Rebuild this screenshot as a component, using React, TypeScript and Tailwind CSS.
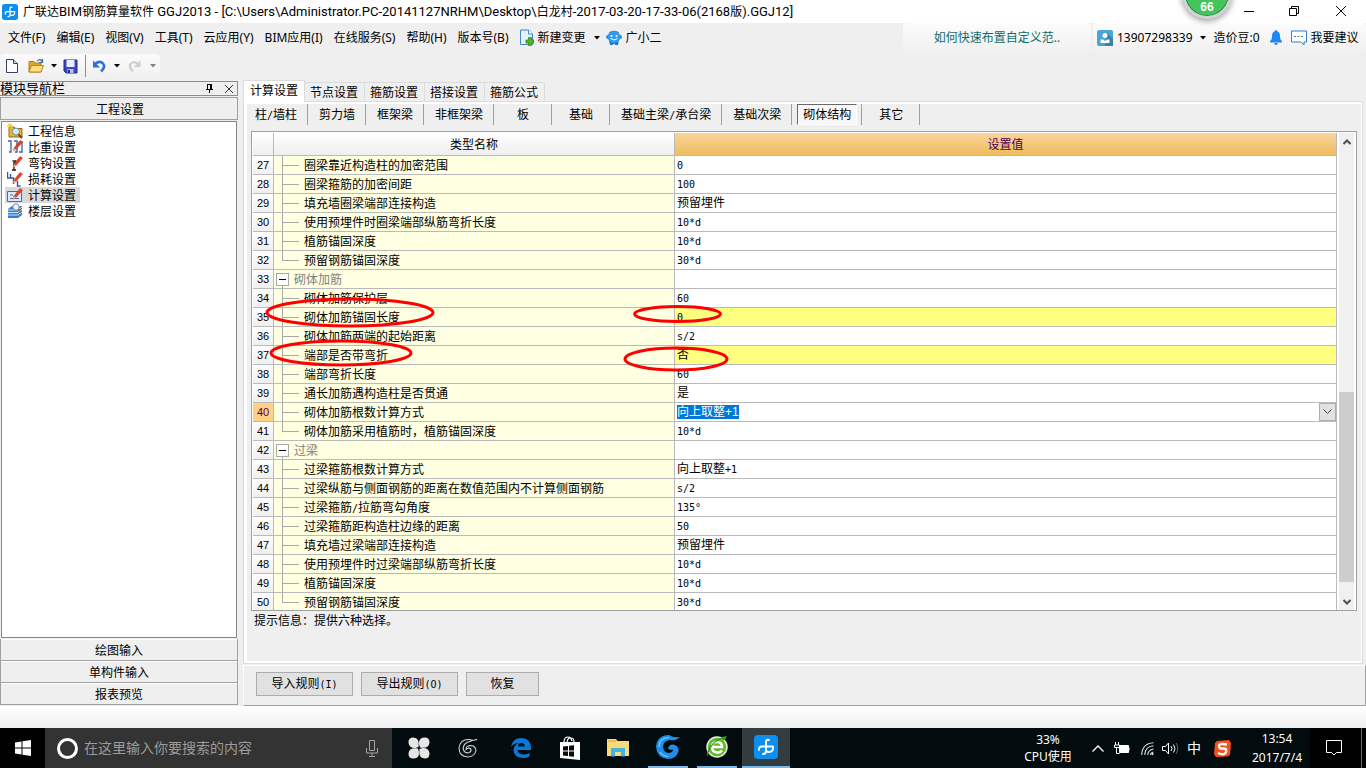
import React, { useState } from 'react';

const UI_FONT = "font-['Noto_Sans','Noto_Sans_CJK_SC',sans-serif]";
const SONG_FONT = "font-['Liberation_Sans','Noto_Sans_CJK_SC',sans-serif]";

interface SettingRow {
  no: number;
  name: string;
  value?: string;
  group?: boolean;
  last?: boolean;
  changed?: boolean;
}

const rows: SettingRow[] = [
  { no: 27, name: '圈梁靠近构造柱的加密范围', value: '0' },
  { no: 28, name: '圈梁箍筋的加密间距', value: '100' },
  { no: 29, name: '填充墙圈梁端部连接构造', value: '预留埋件' },
  { no: 30, name: '使用预埋件时圈梁端部纵筋弯折长度', value: '10*d' },
  { no: 31, name: '植筋锚固深度', value: '10*d' },
  { no: 32, name: '预留钢筋锚固深度', value: '30*d', last: true },
  { no: 33, name: '砌体加筋', group: true },
  { no: 34, name: '砌体加筋保护层', value: '60' },
  { no: 35, name: '砌体加筋锚固长度', value: '0', changed: true },
  { no: 36, name: '砌体加筋两端的起始距离', value: 's/2' },
  { no: 37, name: '端部是否带弯折', value: '否', changed: true },
  { no: 38, name: '端部弯折长度', value: '60' },
  { no: 39, name: '通长加筋遇构造柱是否贯通', value: '是' },
  { no: 40, name: '砌体加筋根数计算方式', value: '向上取整+1' },
  { no: 41, name: '砌体加筋采用植筋时，植筋锚固深度', value: '10*d', last: true },
  { no: 42, name: '过梁', group: true },
  { no: 43, name: '过梁箍筋根数计算方式', value: '向上取整+1' },
  { no: 44, name: '过梁纵筋与侧面钢筋的距离在数值范围内不计算侧面钢筋', value: 's/2' },
  { no: 45, name: '过梁箍筋/拉筋弯勾角度', value: '135°' },
  { no: 46, name: '过梁箍筋距构造柱边缘的距离', value: '50' },
  { no: 47, name: '填充墙过梁端部连接构造', value: '预留埋件' },
  { no: 48, name: '使用预埋件时过梁端部纵筋弯折长度', value: '10*d' },
  { no: 49, name: '植筋锚固深度', value: '10*d' },
  { no: 50, name: '预留钢筋锚固深度', value: '30*d', last: true },
];

const menus = ['文件(F)', '编辑(E)', '视图(V)', '工具(T)', '云应用(Y)', 'BIM应用(I)', '在线服务(S)', '帮助(H)', '版本号(B)'];
const tabs = ['计算设置', '节点设置', '箍筋设置', '搭接设置', '箍筋公式'];
const parts = ['柱/墙柱', '剪力墙', '框架梁', '非框架梁', '板', '基础', '基础主梁/承台梁', '基础次梁', '砌体结构', '其它'];
const windowTitle = '广联达BIM钢筋算量软件 GGJ2013 - [C:\\Users\\Administrator.PC-20141127NRHM\\Desktop\\白龙村-2017-03-20-17-33-06(2168版).GGJ12]';

// ASCII runs get their own face and size, by default half as wide as a Chinese character
const Mixed = ({ text, latin = "font-['DejaVu_Sans_Mono',monospace] text-[10px] leading-none" }: { text: string; latin?: string }) => (
  <>
    {text.split(/([\x20-\x7e°]+)/).map((part, i) =>
      i % 2 ? <span key={i} className={latin}>{part}</span> : part
    )}
  </>
);

const Caret = ({ className = '' }: { className?: string }) => (
  <svg className={className} width="6" height="4" viewBox="0 0 6 4"><path d="M0 0h6L3 3.5z" fill="currentColor" /></svg>
);

/* ---------- icons ---------- */

const AppLogo = ({ size }: { size: number }) => (
  <svg width={size} height={size} viewBox="0 0 24 24">
    <rect width="24" height="24" rx="4" fill="#0d8ff2" />
    <path d="M15 5q-3-1-3 2v9q0 3-3 3M5 15q-.5-3.500 3-3.500h11q.5 5.500-4 5.500-3 0-3-2" fill="none" stroke="#fff" strokeWidth="1.900" strokeLinecap="round" strokeLinejoin="round" />
  </svg>
);

const NewDoc = () => (
  <svg width="16" height="16" viewBox="0 0 16 16">
    <path d="M2.500 1.500h7l4 4v9h-11z" fill="#fafcff" stroke="#33435e" />
    <path d="M9.500 1.500v4h4" fill="#cddcf0" stroke="#33435e" />
  </svg>
);

const OpenFolder = () => (
  <svg width="17" height="16" viewBox="0 0 17 16">
    <path d="M1 3.500h5l1 1.500h6v9H1z" fill="#e2a42e" stroke="#b37a17" />
    <path d="M3.500 7.500h12L13 14H1z" fill="#ffdf80" stroke="#b9851f" />
    <path d="M9 3q3-3 5 .5M14.500 1v3.500H11" fill="none" stroke="#3f6d9c" strokeWidth="1.200" />
  </svg>
);

const SaveDisk = () => (
  <svg width="15" height="15" viewBox="0 0 15 15">
    <path d="M1 1h13v13H3l-2-2z" fill="#3c45c4" stroke="#232a86" />
    <rect x="3.500" y="1" width="8" height="7" fill="#e8eefc" />
    <rect x="4.500" y="10" width="6" height="4" fill="#b9c1e8" />
    <rect x="5" y="11" width="2" height="3" fill="#232a86" />
  </svg>
);

const UndoArrow = () => (
  <svg width="14" height="14" viewBox="0 0 14 14">
    <path d="M3 5q5-4 8-.5T9 12.500" fill="none" stroke="#2f6fd2" strokeWidth="2.500" />
    <path d="M1 1.500v7h7z" fill="#2f6fd2" />
  </svg>
);

const RedoArrow = () => (
  <svg width="14" height="14" viewBox="0 0 14 14">
    <path d="M10 5Q6 1.500 3 4.500t2 8" fill="none" stroke="#cfcfcf" strokeWidth="2.200" />
    <path d="M12.500 1v7H6z" fill="#cfcfcf" />
  </svg>
);

const ChangeDoc = () => (
  <svg width="14" height="17" viewBox="0 0 14 17">
    <path d="M.5 1h8l4 4v10.500H.5z" fill="#e3f1fb" stroke="#3f89c4" />
    <path d="M8.500 1v4h4" fill="#fff" stroke="#3f89c4" />
    <path d="M8.500 8.500h3v2.500H14v3h-2.500v2.500h-3V14H6v-3h2.500z" fill="#55b51f" stroke="#2d7c12" strokeWidth=".7" />
  </svg>
);

const Robot = () => (
  <svg width="16" height="16" viewBox="0 0 16 16">
    <path d="M3 10h10l-1 5H9.500L8 13.500 6.500 15H4z" fill="#1679c5" />
    <circle cx="2" cy="7" r="2" fill="#1e8bdc" /><circle cx="14" cy="7" r="2" fill="#1e8bdc" />
    <ellipse cx="8" cy="7" rx="6.500" ry="6" fill="#2a9df0" />
    <path d="M3 2.500q5-3 10 0" stroke="#6b7f90" fill="none" />
    <circle cx="5.500" cy="6" r="1" fill="#fff" /><circle cx="10.500" cy="6" r="1" fill="#fff" />
    <path d="M4.500 8.500q3.500 3 7 0" stroke="#fff" fill="none" />
  </svg>
);

const Avatar = () => (
  <svg width="16" height="16" viewBox="0 0 16 16">
    <rect width="16" height="16" rx="2" fill="#4ba3d8" />
    <path d="M10 3l6 6v7H8z" fill="#3b7fab" />
    <circle cx="8" cy="5.500" r="2.500" fill="#fff" />
    <path d="M3.500 13V9.500H6L8 11l2-1.500h2.500V13z" fill="#fff" />
  </svg>
);

const Bell = () => (
  <svg width="12" height="15" viewBox="0 0 12 15">
    <path d="M6 0q1 0 1 1.300Q10 2 10 6q0 4 2 5v1.500H0V11q2-1 2-5 0-4 3-4.700Q5 0 6 0zM4 13h4q-.5 2-2 2t-2-2z" fill="#1f86f5" />
  </svg>
);

const Bubble = () => (
  <svg width="16" height="16" viewBox="0 0 16 16">
    <path d="M.5 1h15v11H13v3l-3-3H.5z" fill="#fff" stroke="#2b7fd6" />
    <path d="M3 6.500h2m1.500 0h2m1.500 0h2" stroke="#2b7fd6" />
  </svg>
);

const Pencil = () => <><path d="M7 9l6-7.500 2.500 1.500-6 7L6.500 12z" fill="#e8442c" stroke="#a82a17" strokeWidth=".5" /><path d="M7 9.500L6 12.500l3-2z" fill="#f3c9a0" /></>;

const navItems = [
  { label: '工程信息', icon: <><path d="M2 4h5l1 1.500h7V14H2z" fill="#e7b335" stroke="#946c14" /><path d="M3 0v6M0 3h6M1 1l4 4M5 1L1 5" stroke="#f3c81d" /><circle cx="9" cy="8.500" r="3.500" fill="#d9edfb" stroke="#6d8aa5" /><path d="M11.500 11.500L15 15" stroke="#6b4b12" strokeWidth="2" /></> },
  { label: '比重设置', icon: <><path d="M1 2h3v11H2M7 2h3v11H8M12 3h3v10h-3" fill="none" stroke="#3a62a8" strokeWidth="1.300" /><Pencil /></> },
  { label: '弯钩设置', icon: <><path d="M7 7v8M5 15h4M5.500 6h3v2" fill="none" stroke="#222" strokeWidth="1.400" /><Pencil /></> },
  { label: '损耗设置', icon: <><path d="M.5 1v6h3V3m0 4h3v6m4-3v5h3" fill="none" stroke="#31589c" strokeWidth="1.400" /><Pencil /></> },
  { label: '计算设置', icon: <><path d="M.5 4.500h14v10H.5z" fill="#dbe9fb" stroke="#3c6cb4" /><path d="M3 8h3M3 11.500h9" stroke="#3c6cb4" /><Pencil /></> },
  { label: '楼层设置', icon: <><path d="M1 6l4-3h10v9l-4 3H1z" fill="#2d7fd0" /><path d="M1 7h10l4-3M1 9.500h10l4-3M1 12h10l4-3" fill="none" stroke="#d4e8fa" /><circle cx="9" cy="4" r="3.200" fill="#eaf5fd" stroke="#7b8b98" /><path d="M11.500 6.500L14 9" stroke="#a35a1b" strokeWidth="1.500" /></> },
];

const TaskSwirl = () => (
  <svg width="22" height="22" viewBox="0 0 22 22">
    <g fill="#e6e6e6">
      <path d="M10.500 10Q12 1 5.500.5 0 .5.500 6q1 5.500 7 5z" />
      <path d="M12 10.500q9 1.500 9.500-5Q21.500 0 16 .5 10.500 1 11 7z" />
      <path d="M11.500 12Q10 21 16.500 21.500q5.500 0 5-5.500-1-5.500-7-5z" />
      <path d="M10 11.500q-9-1.500-9.500 5Q.5 22 6 21.500q5.500-.5 5-6.500z" />
    </g>
  </svg>
);

const TaskG = () => (
  <svg width="20" height="20" viewBox="0 0 20 20">
    <path d="M19 1.500Q15 3 11.500 1.500 2 1 1 10q0 8.500 9 9 7-.5 8-6.500-.5-5-6-5-4 .5-4 4 2-2 4.500-1 1.500 2-1 4-4 1.500-6-2.500-1-5 3.500-7.500Q15 2 19 1.500z" fill="#0b1518" stroke="#d0d0d0" strokeWidth="1.100" />
  </svg>
);

const TaskEdge = () => (
  <svg width="20" height="20" viewBox="0 0 20 20">
    <path d="M0 9Q1.500 0 10.500 0 20 .5 20 10v2H6.500q1 4.500 6 4.500 3.500 0 6-1.500v3.500Q15.500 20 12 20 2.500 19.500 2.500 12 3 7 7.500 5 3 5 0 9zm6.800-.5h7q0-3.500-3.300-3.500T6.800 8.500z" fill="#0a78d6" />
  </svg>
);

const TaskStore = () => (
  <svg width="22" height="24" viewBox="0 0 22 24">
    <path d="M5 6q0-5 4-5 3 0 4 4m-5 1q1-5 4-4 3 0 3 4" fill="none" stroke="#fff" strokeWidth="1.200" />
    <path d="M1 6h20v18l-20-2z" fill="#fff" />
    <path d="M4 10.500l5-.5v4.500H4zm6-.7l5-.5v5.200h-5zM4 15.500h5V20l-5-.5zm6 0h5v5.200l-5-.5z" fill="#020b0d" />
  </svg>
);

const TaskFolder = () => (
  <svg width="22" height="20" viewBox="0 0 22 20">
    <path d="M0 1h9l1.500 2H22v15H0z" fill="#f9d978" /><path d="M1 3h8" stroke="#e0a93a" />
    <path d="M4 10h14v8.500h-4V14H8v4.500H4z" fill="#3fb4e6" />
  </svg>
);

const TaskBlueG = () => (
  <svg width="24" height="24" viewBox="0 0 24 24">
    <path d="M24 2q-4 4-10 3Q7 6 7 12q1 6 6 6 4-.5 4-3.500-3 1-5-1 1-4 5-4 6 1 5.500 7Q20 24 12 24 1 23 0 12 1 0 13 0q5 3 11 2z" fill="#1d8fea" />
    <path d="M3 12Q3 3 13 2.500M4 17q3 4 8 4.500" fill="none" stroke="#7fd0fb" strokeWidth="1.200" />
  </svg>
);

const TaskGreenE = () => (
  <svg width="24" height="24" viewBox="0 0 24 24">
    <circle cx="12" cy="12" r="10" fill="#63b82c" stroke="#e4f3d8" strokeWidth="1.500" />
    <path d="M7 12h10q0-5-5-5t-5 5q0 5.500 5.500 5.500 3 0 4.500-2" fill="none" stroke="#fff" strokeWidth="2.600" />
    <path d="M2 22Q1 15 8 8 14 2 22 1q-1 3-4 5 0-2-2-2Q6 8 2 22z" fill="#3c9a1b" />
  </svg>
);

const taskApps = [
  { name: 'swirl', icon: <TaskSwirl />, cell: 'w-[54px]', bar: '' },
  { name: 'gcloud', icon: <TaskG />, cell: 'w-[44px]', bar: '' },
  { name: 'edge', icon: <TaskEdge />, cell: 'w-[62px]', bar: '' },
  { name: 'store', icon: <TaskStore />, cell: 'w-9', bar: '' },
  { name: 'explorer', icon: <TaskFolder />, cell: 'w-[60px]', bar: '' },
  { name: 'browser', icon: <TaskBlueG />, cell: 'w-10', bar: 'border-b-2 border-[#76b9ed]' },
  { name: 'ie', icon: <TaskGreenE />, cell: 'w-10 ml-[9px]', bar: 'border-b-2 border-[#76b9ed]' },
  { name: 'ggj', icon: <AppLogo size={24} />, cell: 'w-12 ml-[5px] bg-[#333c3f]', bar: 'border-b-2 border-[#76b9ed]' },
];

/* ---------- window parts ---------- */

const TitleBar = () => (
  <header className="relative flex h-[23px] shrink-0 items-center bg-white pl-[2px]">
    <AppLogo size={16} />
    <h1 className="ml-[5px] flex-1 whitespace-nowrap text-[12px] leading-4">
      <Mixed text={windowTitle} latin="font-['Roboto',sans-serif] text-[13px] leading-none" />
    </h1>
    <div className="absolute -top-[31px] right-[134px] z-10 flex size-[50px] items-end justify-center rounded-full border-[3px] border-[#d3d3d3] bg-[#45c35c] pb-[2px] font-['Liberation_Sans',sans-serif] text-[12px] font-bold leading-[14px] text-white shadow-[0_2px_6px_rgba(0,0,0,0.4)] ring-1 ring-[#1f8f4a] ring-inset">
      66
    </div>
    <div className="flex pb-[2px]">
      <button aria-label="最小化" className="flex h-5 w-[46px] items-center justify-center"><svg width="10" height="10"><path d="M0 5.500h10" stroke="#000" /></svg></button>
      <button aria-label="还原" className="flex h-5 w-[44px] items-center justify-center"><svg width="10" height="10"><path d="M.5 2.500h7v7h-7zM2.500 2.500v-2h7v7h-2" fill="none" stroke="#000" /></svg></button>
      <button aria-label="关闭" className="flex h-5 w-[50px] items-center justify-center"><svg width="10" height="10"><path d="M0 0l10 10M10 0L0 10" stroke="#000" /></svg></button>
    </div>
  </header>
);

const MenuBar = () => (
  <nav className="flex h-[31px] shrink-0 items-center whitespace-nowrap pb-[2px] pl-2 text-[12px] leading-4">
    <div className="flex gap-[11px]">
      {menus.map((m) => <button key={m}>{m}</button>)}
    </div>
    <button className="ml-[11px] flex items-center"><ChangeDoc /><span className="ml-1">新建变更</span><Caret className="ml-2" /></button>
    <button className="ml-[6px] flex items-center gap-1"><Robot />广小二</button>
    <div className="ml-auto flex h-[29px] w-[188px] items-center justify-center rounded-sm bg-gradient-to-b from-[#fcfcfc] to-[#f0f0f0]">
      <a href="#help" className="text-[#0f6b6b]">如何快速布置自定义范..</a>
    </div>
    <div className="ml-[2px] flex h-[29px] w-[273px] items-center rounded-sm bg-gradient-to-b from-[#fcfcfc] to-[#f0f0f0] pl-1">
      <Avatar />
      <button className="ml-1 flex items-center">13907298339<Caret className="ml-[7px]" /></button>
      <span className="ml-2">造价豆:0</span>
      <button aria-label="消息" className="ml-[10px]"><Bell /></button>
      <button className="ml-[9px] flex items-center gap-1"><Bubble />我要建议</button>
    </div>
  </nav>
);

const ToolBar = () => (
  <div className="flex h-6 w-[160px] shrink-0 items-center rounded-sm bg-gradient-to-b from-[#fbfbfb] to-[#f0f0f0] pl-1">
    <button aria-label="新建"><NewDoc /></button>
    <button aria-label="打开" className="ml-2 flex items-center"><OpenFolder /><Caret className="ml-[6px]" /></button>
    <button aria-label="保存" className="ml-[6px]"><SaveDisk /></button>
    <span className="ml-[7px] h-[22px] w-px bg-[#8d8d8d]" />
    <button aria-label="撤销" className="ml-[6px] flex items-center"><UndoArrow /><Caret className="ml-2" /></button>
    <button aria-label="恢复" className="ml-2 flex items-center text-[#808080]"><RedoArrow /><Caret className="ml-2" /></button>
  </div>
);

const NavPanel = () => {
  const sections = ['绘图输入', '单构件输入', '报表预览'];
  return (
    <aside className="mr-[5px] flex w-[238px] shrink-0 flex-col pb-px pt-[3px] text-[12px] leading-4">
      <div className="flex h-[15px] items-center border-y border-r border-[#8c8c8c] pr-1">
        <span className="flex-1 text-[13px] leading-[13px]">模块导航栏</span>
        <button aria-label="固定" className="mr-3"><svg width="7" height="9"><path d="M1.500 0v5M1 .5h4M4.500 0v5M5.500 0v5M0 5.500h7M3.500 6v3" stroke="#000" fill="none" /></svg></button>
        <button aria-label="关闭导航栏"><svg width="8" height="8"><path d="M0 0l8 8M8 0L0 8" stroke="#333" /></svg></button>
      </div>
      <button className="mt-px h-[23px] border border-[#a0a0a0] bg-[#efefef] pl-[2px] pt-[2px]">工程设置</button>
      <ul className="mx-px mt-px flex min-h-0 flex-1 flex-col border border-[#828790] bg-white pl-[3px] pt-px">
        {navItems.map((item) => (
          <li key={item.label} className="h-4">
            <button className={`flex h-4 items-center gap-[5px] pl-[2px] pr-1 leading-4 ${item.label === '计算设置' ? 'bg-[#d9d9d9]' : ''}`}>
              <svg width="16" height="16" viewBox="0 0 16 16">{item.icon}</svg>
              <span className="pt-[2px]">{item.label}</span>
            </button>
          </li>
        ))}
      </ul>
      <div className="mt-px flex flex-col border-x border-[#a0a0a0]">
        {sections.map((s) => (
          <button key={s} className="h-[22px] border-b border-t border-b-[#a0a0a0] border-t-white bg-[#efefef] pt-[2px]">{s}</button>
        ))}
      </div>
    </aside>
  );
};

const TreeLine = ({ last }: { last?: boolean }) => (
  <span className="ml-2 mr-[5px] flex w-[17px] flex-col self-stretch">
    <span className="h-[10px] border-b border-l border-[#a9a9a9]" />
    {!last && <span className="flex-1 border-l border-[#a9a9a9]" />}
  </span>
);

const ValueCell = ({ row }: { row: SettingRow }) => {
  const [value, setValue] = useState(row.value ?? '');
  if (row.no !== 40) {
    return <div className="flex h-[18px] items-center pl-[2px]"><span><Mixed text={value} /></span></div>;
  }
  return (
    <div className="flex h-[18px] items-center justify-between pl-[2px]">
      <input
        aria-label={row.name}
        value={value}
        onChange={(e) => setValue(e.target.value)}
        className="h-[14px] w-[62px] bg-[#0078d7] text-[12px] leading-[14px] text-white outline-none"
      />
      <button aria-label="展开选项" className="flex h-[18px] w-[17px] items-center justify-center border border-[#adadad] bg-[#e1e1e1]">
        <svg width="9" height="6"><path d="M.5.5l4 4 4-4" fill="none" stroke="#444" /></svg>
      </button>
    </div>
  );
};

const SettingsTable = () => {
  const cell = 'h-[19px] border-b border-r border-[#bababa] p-0';
  const head = 'h-[23px] border-b border-r border-[#bababa] bg-gradient-to-b p-0 pt-px font-normal';
  return (
    <div className="relative mx-1 mt-[6px] flex min-h-0 flex-1 overflow-hidden border border-[#a0a0a0] bg-white pl-px pt-px">
      <div className="min-w-0 flex-1 overflow-hidden">
        <table className="w-full table-fixed border-separate border-spacing-0 text-[12px] leading-4">
          <colgroup>
            <col className="w-[21px]" />
            <col className="w-[401px]" />
            <col />
          </colgroup>
          <thead>
            <tr>
              <th className={`${head} from-white to-[#efefef]`} />
              <th className={`${head} from-white to-[#efefef]`}>类型名称</th>
              <th className={`${head} from-[#fad49a] to-[#efbd5d] text-[#4b0055]`}>设置值</th>
            </tr>
          </thead>
          <tbody>
            {rows.map((row) => (
              <tr key={row.no}>
                <td className={`${cell} text-center text-[11px] ${row.no === 40 ? 'bg-[#ffcf87] text-[#4b0055]' : 'bg-gradient-to-b from-white to-[#efefef]'}`}>{row.no}</td>
                <td className={`${cell} bg-[#ffffe1]`}>
                  <div className="flex h-[18px] items-center whitespace-nowrap">
                    {row.group ? (
                      <span className="ml-[2px] mr-[5px] flex flex-col items-center self-stretch pt-[3px]">
                        <button aria-label="折叠" className="flex size-[13px] shrink-0 items-center justify-center border border-[#a9a9a9] bg-white"><span className="h-px w-[7px] bg-black" /></button>
                        <span className="flex-1 border-l border-[#a9a9a9]" />
                      </span>
                    ) : <TreeLine last={row.last} />}
                    <span className={row.group ? 'pt-[2px] text-[#808080]' : 'pt-[2px]'}><Mixed text={row.name} /></span>
                  </div>
                </td>
                <td className={`${cell} ${row.changed ? 'bg-[#ffff80]' : 'bg-white'}`}><ValueCell row={row} /></td>
              </tr>
            ))}
          </tbody>
        </table>
      </div>

      <div className="ml-[2px] mr-[2px] flex w-[15px] flex-col bg-[#f0f0f0]">
        <button aria-label="向上滚动" className="flex h-[17px] items-center justify-center"><svg width="8" height="6"><path d="M.5 5L4 1.500 7.500 5" fill="none" stroke="#505050" strokeWidth="2" /></svg></button>
        <span className="flex-[242]" />
        <span className="flex-[190] bg-[#cdcdcd]" />
        <span className="flex-[11]" />
        <button aria-label="向下滚动" className="flex h-[17px] items-center justify-center"><svg width="8" height="6"><path d="M.5 1L4 4.500 7.500 1" fill="none" stroke="#505050" strokeWidth="2" /></svg></button>
      </div>

      {/* hand-drawn marks around the changed settings */}
      <svg className="pointer-events-none absolute left-0 top-0" width="500" height="260" viewBox="252 132 500 260" fill="none" stroke="#f00" strokeWidth="3">
        <ellipse cx="350" cy="312.500" rx="83" ry="13.500" />
        <ellipse cx="341" cy="353" rx="70" ry="12" />
        <ellipse cx="677.500" cy="314" rx="43" ry="7.500" />
        <ellipse cx="676" cy="359" rx="51" ry="11" />
      </svg>
    </div>
  );
};

const Workspace = () => {
  const [tab, setTab] = useState('计算设置');
  const [part, setPart] = useState('砌体结构');
  const actions = [
    { label: '导入规则(I)', width: 'w-[97px]' },
    { label: '导出规则(O)', width: 'w-[97px]' },
    { label: '恢复', width: 'w-[73px]' },
  ];

  return (
    <main className="flex min-w-0 flex-1 flex-col pt-[2px] text-[12px] leading-4">
      <div className="mr-[3px] flex min-h-0 flex-1 flex-col">
        <div className="flex h-[21px] items-end" role="tablist">
          {tabs.map((t) => (
            <button
              key={t}
              role="tab"
              aria-selected={t === tab}
              onClick={() => setTab(t)}
              className={t === tab
                ? 'relative -mb-px h-[22px] w-[62px] border border-b-0 border-[#dcdcdc] bg-white pb-[2px]'
                : 'h-[19px] w-[60px] border-r border-t border-[#dcdcdc] bg-[#efefef] pr-px pt-px'}
            >
              {t}
            </button>
          ))}
        </div>
        <div className="flex min-h-0 flex-1 flex-col border border-[#dcdcdc] bg-white pb-[2px] pl-[3px] pr-px pt-[2px]">
          <div className="flex min-h-0 flex-1 flex-col bg-[#efefef]">
            <div className="flex h-[21px] pl-[2px]">
              {parts.map((p) => (
                <div key={p} className="flex border-r border-[#a0a0a0] pl-[5px] pr-1 first:pl-0">
                  <button
                    onClick={() => setPart(p)}
                    className={`min-w-12 whitespace-nowrap px-[5px] ${p === part ? 'border border-b-white border-l-[#696969] border-r-white border-t-[#696969] bg-[#f8f8f8] pt-px' : 'border border-transparent'}`}
                  >
                    <Mixed text={p} />
                  </button>
                </div>
              ))}
            </div>
            <SettingsTable />
            <p className="h-[50px] shrink-0 pl-[7px] pt-[2px]">提示信息：提供六种选择。</p>
          </div>
        </div>
      </div>
      <div className="mt-px flex h-[41px] shrink-0 items-center gap-2 border border-b-[#a0a0a0] border-l-white border-r-[#a0a0a0] border-t-white pl-3 pb-[3px]">
        {actions.map((a) => (
          <button key={a.label} className={`h-6 border border-[#adadad] bg-[#e1e1e1] ${a.width}`}><Mixed text={a.label} /></button>
        ))}
      </div>
    </main>
  );
};

const TaskBar = () => (
  <footer className="flex h-10 shrink-0 items-stretch bg-[#020b0d] text-[12px] leading-4 text-white">
    <button aria-label="开始" className="flex w-[45px] items-center justify-center bg-black">
      <svg width="16" height="16" viewBox="0 0 16 16"><path d="M0 2.500l6.500-1v6H0zM7.500 1.300L16 0v7.500H7.500zM0 8.500h6.500v6l-6.500-1zM7.500 8.500H16V16l-8.500-1.300z" fill="#fff" /></svg>
    </button>
    <label className="flex w-[347px] items-center bg-[#333] pl-3 pr-[14px]">
      <span className="size-[21px] rounded-full border-[3px] border-white" />
      <input aria-label="搜索" placeholder="在这里输入你要搜索的内容" className="ml-[6px] min-w-0 flex-1 bg-transparent text-[14px] leading-5 outline-none placeholder:text-[#9b9b9b]" />
      <svg width="12" height="17" viewBox="0 0 12 17"><path d="M3.500.5h5v10h-5zM.5 8v5h11V8M6 13v3.500M3 16.500h6" fill="none" stroke="#a5a5a5" /></svg>
    </label>
    {taskApps.map((app) => (
      <button key={app.name} aria-label={app.name} className={`flex items-center justify-center ${app.cell} ${app.bar}`}>{app.icon}</button>
    ))}
    <div className="ml-auto flex items-center">
      <div className="w-[52px] text-center leading-[17px]">33%<br />CPU使用</div>
      <div className="ml-[18px] flex items-center">
        <svg width="12" height="7"><path d="M.5 6.500L6 1l5.500 5.500" fill="none" stroke="#fff" strokeWidth="1.300" /></svg>
        <svg className="ml-[10px]" width="16" height="12"><path d="M5.500 3.500h9v7h-9z" fill="#fff" stroke="#fff" /><path d="M15 5.500v3M2.500 6v5.500h3M1.500 0v3M4.500 0v3M.5 3h5v2.500h-5z" fill="none" stroke="#fff" /></svg>
        <svg className="ml-[11px]" width="13" height="13"><path d="M.7 13Q1 1.500 12.500.7M3.700 13Q4 4.500 12.500 3.700M6.700 13q.3-5 5.800-6M9.500 13q.2-2.500 3-3" fill="none" stroke="#ddd" strokeWidth="1.100" /><circle cx="11.500" cy="12" r="1" fill="#fff" /></svg>
        <svg className="ml-2" width="17" height="13"><path d="M.5 4.500h3l3-3.500v11l-3-3.500h-3z" fill="none" stroke="#fff" /><path d="M9 4q2 2.500 0 5M11.500 2.500q3 4 0 8" fill="none" stroke="#fff" /><path d="M14 1q3.500 5.500 0 11" fill="none" stroke="#666" /></svg>
        <span className="ml-2 text-[14px]">中</span>
        <svg className="ml-[13px]" width="17" height="17" viewBox="0 0 17 17"><path d="M3 1l12-1 2 3-1 12-3 1.500L2 17l-2-3 1-11z" fill="#f4511e" /><path d="M13 4.500Q5 3 5 6t4 2.500 3 3.500-8 1" fill="none" stroke="#fff" strokeWidth="2.400" /></svg>
      </div>
      <div className="ml-[13px] w-[66px] text-center leading-[19px]">13:54<br />2017/7/4</div>
      <button aria-label="通知" className="flex h-10 w-[51px] items-center justify-center bg-black pr-1">
        <svg width="16" height="16"><path d="M.5.5h15v12h-5L8 15l-2.500-2.500h-5z" fill="none" stroke="#fff" /></svg>
      </button>
      <span className="h-10 w-[5px] border-l border-[#6a6a6a] bg-black" />
    </div>
  </footer>
);

export default function App() {
  return (
    <div className={`flex h-screen flex-col overflow-hidden bg-[#efefef] text-black ${UI_FONT}`}>
      <TitleBar />
      <MenuBar />
      <ToolBar />
      <div className={`flex min-h-0 flex-1 ${SONG_FONT}`}>
        <NavPanel />
        <Workspace />
      </div>
      <div className="h-[22px] shrink-0 bg-gradient-to-b from-white to-[#f0f0f0]" />
      <TaskBar />
    </div>
  );
}
